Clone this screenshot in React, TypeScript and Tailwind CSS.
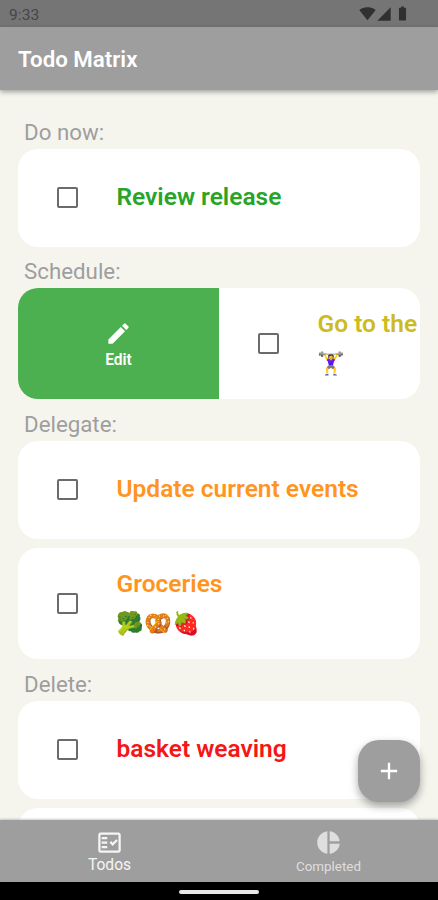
import { ReactNode } from "react";
import {
  MdAdd,
  MdBatteryFull,
  MdEdit,
  MdOutlineFactCheck,
  MdPieChart,
  MdSignalCellular4Bar,
  MdSignalWifi4Bar,
} from "react-icons/md";

function StatusBar() {
  return (
    <div className="flex h-[27px] shrink-0 items-center justify-between bg-[#757575] pl-[9px] pr-[27px]">
      <span className="pt-[3px] text-[15.5px] leading-6 tracking-[0.1px] text-[#454545]">9:33</span>
      <div className="flex items-center text-[#303030]">
        <MdSignalWifi4Bar className="size-[17px]" />
        <MdSignalCellular4Bar className="mr-0.5 size-4" />
        <MdBatteryFull className="size-[17px]" />
      </div>
    </div>
  );
}

function SectionTitle({ children, className }: { children: ReactNode; className: string }) {
  return <h2 className={`pl-1.5 text-[22.3px] font-normal text-[#9e9e9e] ${className}`}>{children}</h2>;
}

function Checkbox() {
  return <span className="block size-[21px] shrink-0 rounded-[2px] border-2 border-[#6b6b6b]" />;
}

type TodoCardProps = {
  title: string;
  color: string;
  note?: string;
  className?: string;
};

function TodoCard({ title, color, note, className = "" }: TodoCardProps) {
  return (
    <div
      className={`flex shrink-0 items-center rounded-[20px] bg-white pl-[39px] ${note ? "h-[111px]" : "h-[98px]"} ${className}`}
    >
      <Checkbox />
      <div className="ml-[38.5px] whitespace-nowrap">
        <p className={`text-[24.5px] leading-[34px] font-semibold ${color}`}>{title}</p>
        {note && <p className="mt-[5px] text-[22.3px] leading-[34px]">{note}</p>}
      </div>
    </div>
  );
}

export default function App() {
  return (
    <div className="relative flex h-[900px] w-[438px] flex-col overflow-hidden bg-[#f5f5ee] font-[Roboto,'Noto_Color_Emoji',sans-serif]">
      <StatusBar />
      <header className="z-10 flex h-[63px] shrink-0 items-center bg-[#9e9e9e] pt-0.5 pl-[18px] shadow-[0_2px_5px_rgba(0,0,0,0.35)]">
        <h1 className="text-[22.3px] font-semibold text-white">Todo Matrix</h1>
      </header>

      <main className="flex min-h-0 flex-1 flex-col overflow-hidden px-[18px] pt-[26px]">
        <SectionTitle className="h-[33px] shrink-0 leading-[33px]">Do now:</SectionTitle>
        <TodoCard title="Review release" color="text-[#28a428]" className="pb-0.5" />

        <SectionTitle className="h-[41.4px] shrink-0 leading-[49px]">Schedule:</SectionTitle>
        <div className="flex h-[111px] shrink-0 overflow-hidden rounded-[20px] bg-white">
          <div className="flex w-[201px] shrink-0 flex-col items-center justify-center bg-[#4caf50] pt-1.5 text-white">
            <MdEdit className="size-[27px]" />
            <span className="text-[15.6px] leading-[26px] font-semibold">Edit</span>
          </div>
          <TodoCard title="Go to the" color="text-[#cdbb22]" note="🏋️‍♀️" />
        </div>

        <SectionTitle className="h-[41.3px] shrink-0 leading-[50px]">Delegate:</SectionTitle>
        <TodoCard title="Update current events" color="text-[#ff951f]" className="pb-px" />
        <TodoCard title="Groceries" color="text-[#ff951f]" note="🥦🥨🍓" className="mt-[9.3px]" />

        <SectionTitle className="h-[42px] shrink-0 leading-[50px]">Delete:</SectionTitle>
        <TodoCard title="basket weaving" color="text-[#f51616]" className="pb-px" />
        <TodoCard title="" color="text-[#f51616]" className="mt-[9px]" />
      </main>

      <button className="absolute left-[358px] top-[740px] flex size-[62px] items-center justify-center rounded-[21px] bg-[#9e9e9e] text-white shadow-[0_4px_8px_rgba(0,0,0,0.35)]">
        <MdAdd className="size-[28px]" />
      </button>

      <nav className="z-10 flex h-[62px] shrink-0 bg-[#9e9e9e] shadow-[0_-1px_2px_rgba(0,0,0,0.2)]">
        <a className="flex flex-1 flex-col items-center pt-[9px] text-[#f5f5f5]">
          <MdOutlineFactCheck className="size-[27px]" />
          <span className="text-[15.6px] leading-[19px]">Todos</span>
        </a>
        <a className="flex flex-1 flex-col items-center pt-[9px] text-[#dedede]">
          <MdPieChart className="size-[27px]" />
          <span className="text-[13.4px] leading-[21px]">Completed</span>
        </a>
      </nav>
      <div className="flex h-[18px] shrink-0 items-center justify-center bg-black pt-px">
        <span className="h-1 w-20 rounded-full bg-[#e8e8e8]" />
      </div>
    </div>
  );
}
